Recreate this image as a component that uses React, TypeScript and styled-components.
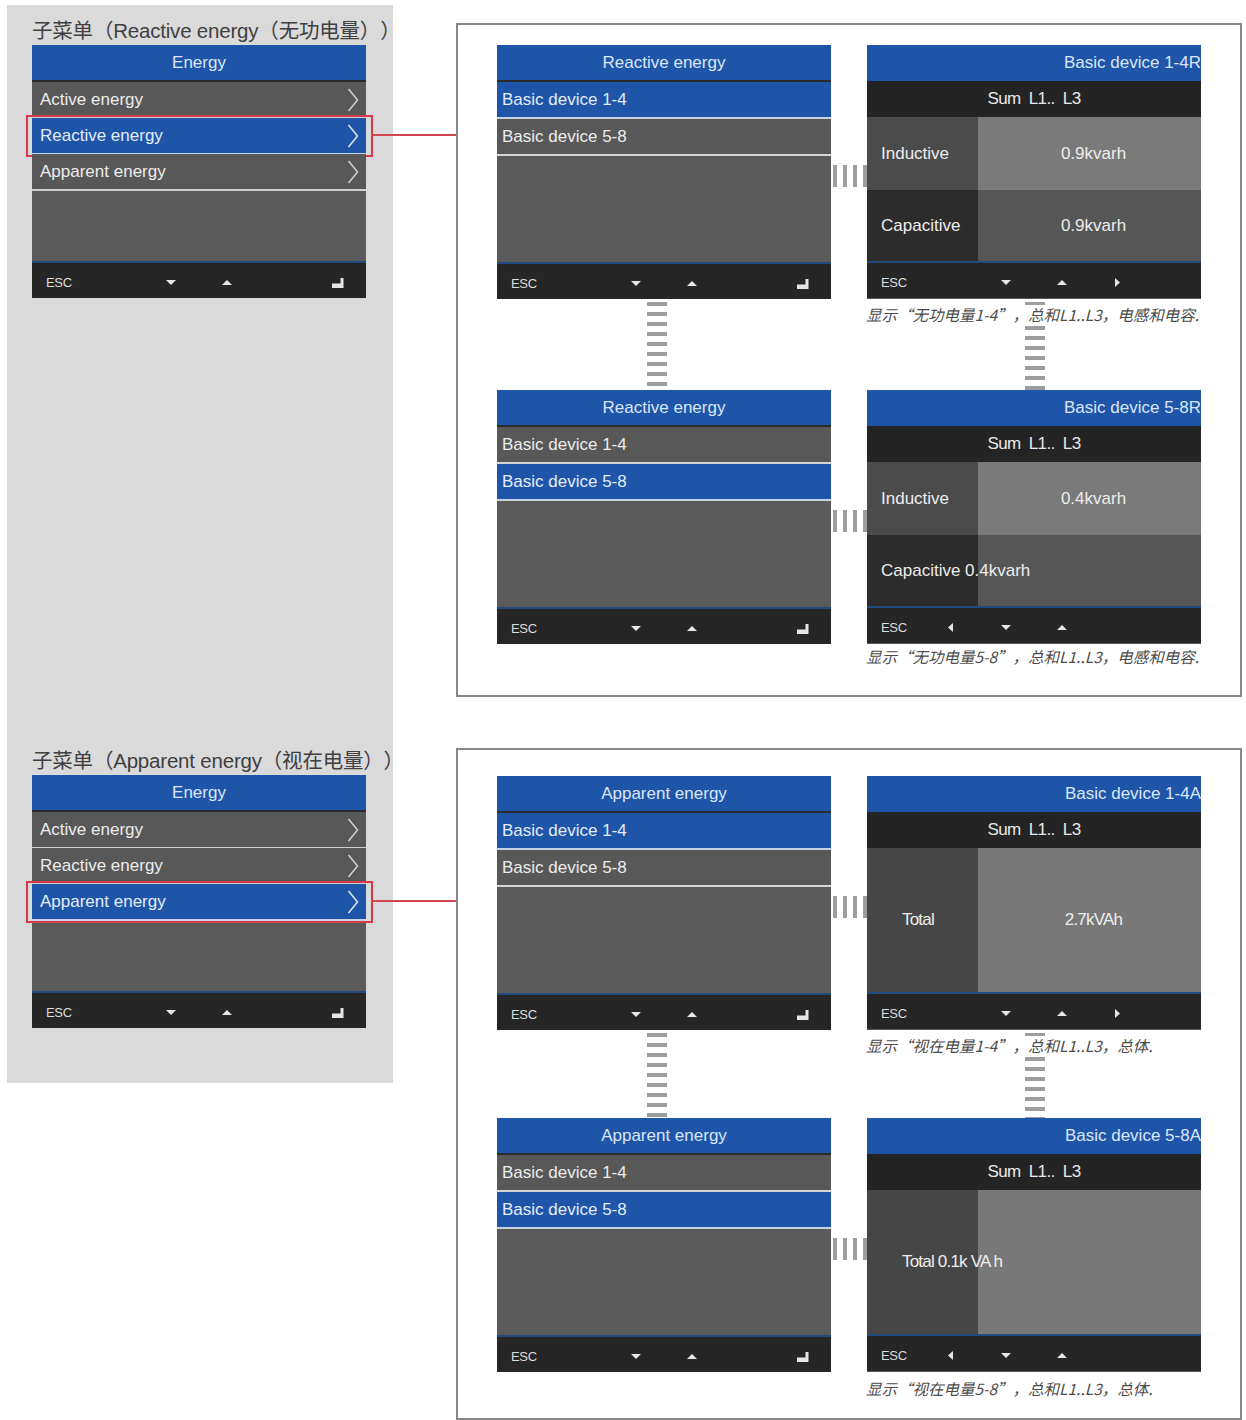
import React from "react";
import styled, { createGlobalStyle } from "styled-components";

const BLUE = "#1f55a8";
const ROW = "#585858";
const SANS = `"Liberation Sans", Arial, "Noto Sans CJK SC", sans-serif`;

const GlobalStyle = createGlobalStyle`
  *, *::before, *::after { box-sizing: border-box; }
  html, body { margin: 0; padding: 0; background: #ffffff; }
  body { font-family: ${SANS}; }
`;

const Page = styled.div`
  display: flex;
  align-items: flex-start;
  width: 1246px;
  height: 1420px;
  overflow: hidden;
  background: #ffffff;
`;

/* ---------- left column: the Energy sub-menus ---------- */

const SidePanel = styled.aside`
  width: 386px;
  height: 1078px;
  margin: 5px 0 0 7px;
  padding: 12px 0 0 25px;
  background: #dadada;
  display: flex;
  flex-direction: column;
`;

const MenuGroup = styled.section<{ $gap: number }>`
  display: flex;
  flex-direction: column;
  margin-top: ${(p) => p.$gap}px;
`;

const GroupTitle = styled.h2`
  margin: 0;
  height: 28px;
  line-height: 28px;
  font-size: 20.5px;
  font-weight: 400;
  color: #404040;
  white-space: nowrap;
  letter-spacing: -0.2px;
  text-spacing-trim: space-all;
`;

/* ---------- device screen parts ---------- */

const Screen = styled.div<{ $h: number }>`
  width: 334px;
  height: ${(p) => p.$h}px;
  display: flex;
  flex-direction: column;
  background: ${ROW};
  font-family: ${SANS};
`;

const ScreenHeader = styled.div<{ $align: "center" | "flex-end"; $divider: boolean; $h: number }>`
  height: ${(p) => p.$h}px;
  flex: none;
  background: ${BLUE};
  color: #d9e6f8;
  font-size: 17px;
  display: flex;
  align-items: center;
  justify-content: ${(p) => p.$align};
  white-space: nowrap;
  overflow: hidden;
  border-bottom: ${(p) => (p.$divider ? "2px solid #2a2a2a" : "none")};
`;

const MenuRow = styled.div<{ $on: boolean; $last: boolean; $marked: boolean }>`
  position: relative;
  flex: none;
  height: ${(p) => (p.$last ? 37 : 36)}px;
  padding: 0 7px 0 8px;
  display: flex;
  align-items: center;
  justify-content: space-between;
  background: ${(p) => (p.$on ? BLUE : ROW)};
  color: ${(p) => (p.$on ? "#e3ecf9" : "#ececec")};
  font-size: 17px;
  border-bottom: ${(p) => (p.$last ? 2 : 1)}px solid ${(p) => (p.$on ? "#c6d2e4" : "#cfcfcf")};

  ${(p) =>
    p.$marked &&
    `
    &::before {
      content: "";
      position: absolute;
      left: -6px;
      right: -7px;
      top: -3px;
      bottom: -4px;
      border: 2px solid #d33b49;
      pointer-events: none;
    }
    &::after {
      content: "";
      position: absolute;
      left: calc(100% + 7px);
      top: calc(50% - 2px);
      width: 83px;
      height: 2px;
      background: #cf4650;
    }
  `}
`;

const ListRow = styled.div<{ $on: boolean }>`
  flex: none;
  height: 37px;
  padding-left: 5px;
  display: flex;
  align-items: center;
  background: ${(p) => (p.$on ? BLUE : ROW)};
  color: ${(p) => (p.$on ? "#e3ecf9" : "#ececec")};
  font-size: 17px;
  border-bottom: 2px solid ${(p) => (p.$on ? "#c6d2e4" : "#d6d6d6")};
`;

const Filler = styled.div`
  flex: 1;
  background: #5a5a5a;
`;

const Footer = styled.div`
  flex: none;
  height: 37px;
  background: #262626;
  border-top: 2px solid #24497e;
  display: grid;
  grid-template-columns: repeat(6, 1fr);
  align-items: center;
`;

const FooterSlot = styled.div<{ $start?: boolean }>`
  display: flex;
  align-items: center;
  justify-content: ${(p) => (p.$start ? "flex-start" : "center")};
  padding-left: ${(p) => (p.$start ? 14 : 0)}px;
  padding-top: 4px;
  color: #dcdcdc;
  font-size: 13px;
  letter-spacing: -0.3px;
`;

const SumRow = styled.div`
  flex: none;
  height: 36px;
  background: #242424;
  color: #e8e8e8;
  font-size: 17px;
  display: flex;
  align-items: center;
  justify-content: center;
  letter-spacing: -0.6px;
  word-spacing: 4px;
  white-space: pre;
`;

const DataRow = styled.div<{ $h: number }>`
  flex: none;
  height: ${(p) => p.$h}px;
  display: grid;
  grid-template-columns: 111px 1fr;
`;

const LabelCell = styled.div<{ $bg: string; $pad: number; $tight: boolean }>`
  position: relative;
  z-index: 1;
  background: ${(p) => p.$bg};
  padding-left: ${(p) => p.$pad}px;
  display: flex;
  align-items: center;
  white-space: nowrap;
  color: #ededed;
  font-size: 17px;
  letter-spacing: ${(p) => (p.$tight ? "-0.8px" : "0")};
`;

const ValueCell = styled.div<{ $bg: string; $tight: boolean }>`
  background: ${(p) => p.$bg};
  padding-left: 8px;
  display: flex;
  align-items: center;
  justify-content: center;
  color: #ededed;
  font-size: 17px;
  letter-spacing: ${(p) => (p.$tight ? "-0.8px" : "0")};
`;

/* ---------- right column: framed navigation boards ---------- */

const BoardColumn = styled.div`
  display: flex;
  flex-direction: column;
  gap: 51px;
  margin: 23px 0 0 63px;
`;

const Board = styled.section<{ $top: number; $h: number }>`
  width: 786px;
  height: ${(p) => p.$h}px;
  border: 2px solid #878787;
  padding: ${(p) => p.$top}px 39px 0;
  display: grid;
  grid-template-columns: 334px 36px 334px;
  align-content: start;
`;

const HLink = styled.div`
  align-self: start;
  margin-top: 120px;
  height: 22px;
  background: repeating-linear-gradient(
    to right,
    transparent 0 2px,
    #9d9d9d 2px 6px,
    transparent 6px 10px
  );
`;

const LinkCell = styled.div<{ $h: number }>`
  height: ${(p) => p.$h}px;
  display: flex;
  flex-direction: column;
`;

const VLink = styled.div<{ $x: number; $h?: number }>`
  width: 20px;
  margin-left: ${(p) => p.$x}px;
  ${(p) => (p.$h ? `height: ${p.$h}px; flex: none;` : "flex: 1;")}
  background: repeating-linear-gradient(
    to bottom,
    transparent 0 3px,
    #9d9d9d 3px 7px,
    transparent 7px 10px
  );
`;

const Caption = styled.p<{ $mt?: number }>`
  margin: ${(p) => p.$mt ?? 0}px 0 0 -1px;
  height: 18px;
  line-height: 18px;
  background: #ffffff;
  color: #4c4c4c;
  font-family: "Noto Sans CJK SC", "Liberation Sans", sans-serif;
  font-size: 15.5px;
  font-style: italic;
  white-space: nowrap;
`;

/* ---------- icons ---------- */

type Dir = "up" | "down" | "left" | "right";

const Tri = ({ dir }: { dir: Dir }) => {
  const flat = dir === "up" || dir === "down";
  const w = flat ? 10 : 5;
  const h = flat ? 5 : 9;
  const pts = {
    down: "0,0 10,0 5,5",
    up: "5,0 10,5 0,5",
    left: "5,0 5,9 0,4.5",
    right: "0,0 5,4.5 0,9",
  }[dir];
  return (
    <svg width={w} height={h} viewBox={`0 0 ${w} ${h}`}>
      <polygon points={pts} fill="#e6e6e6" />
    </svg>
  );
};

const EnterKey = () => (
  <svg width="12" height="10" viewBox="0 0 12 10">
    <path d="M8.5 0 H11.5 V10 H0 V5.5 H8.5 Z" fill="#e6e6e6" />
  </svg>
);

const Chevron = ({ on }: { on: boolean }) => (
  <svg width="12" height="24" viewBox="0 0 12 24">
    <polyline
      points="1.5,1 10.5,12 1.5,23"
      fill="none"
      stroke={on ? "#d6e2f4" : "#cfcfcf"}
      strokeWidth="1.6"
    />
  </svg>
);

type Key = "esc" | Dir | "enter" | null;

const KeyBar = ({ keys }: { keys: Key[] }) => (
  <Footer>
    {keys.map((k, i) => (
      <FooterSlot key={i} $start={k === "esc"}>
        {k === "esc" && "ESC"}
        {k === "enter" && <EnterKey />}
        {(k === "up" || k === "down" || k === "left" || k === "right") && <Tri dir={k} />}
      </FooterSlot>
    ))}
  </Footer>
);

const LIST_KEYS: Key[] = ["esc", null, "down", "up", null, "enter"];

/* ---------- screens ---------- */

const MENU_ITEMS = ["Active energy", "Reactive energy", "Apparent energy"];

const EnergyMenu = ({ selected }: { selected: number }) => (
  <Screen $h={253}>
    <ScreenHeader $align="center" $divider $h={37}>
      Energy
    </ScreenHeader>
    {MENU_ITEMS.map((item, i) => (
      <MenuRow
        key={item}
        $on={i === selected}
        $marked={i === selected}
        $last={i === MENU_ITEMS.length - 1}
      >
        <span>{item}</span>
        <Chevron on={i === selected} />
      </MenuRow>
    ))}
    <Filler />
    <KeyBar keys={LIST_KEYS} />
  </Screen>
);

const DeviceList = ({ title, selected }: { title: string; selected: number }) => (
  <Screen $h={254}>
    <ScreenHeader $align="center" $divider $h={37}>
      {title}
    </ScreenHeader>
    {["Basic device 1-4", "Basic device 5-8"].map((d, i) => (
      <ListRow key={d} $on={i === selected}>
        {d}
      </ListRow>
    ))}
    <Filler />
    <KeyBar keys={LIST_KEYS} />
  </Screen>
);

type Reading = {
  label: string;
  value: string;
  h: number;
  labelBg: string;
  valueBg: string;
  pad: number;
  tight?: boolean;
};

type Detail = {
  title: string;
  readings: Reading[];
  keys: Key[];
};

const DeviceDetail = ({ d }: { d: Detail }) => (
  <Screen $h={254}>
    <ScreenHeader $align="flex-end" $divider={false} $h={36}>
      {d.title}
    </ScreenHeader>
    <SumRow>{"Sum L1.. L3"}</SumRow>
    {d.readings.map((r) => (
      <DataRow key={r.label} $h={r.h}>
        <LabelCell $bg={r.labelBg} $pad={r.pad} $tight={!!r.tight}>
          {r.label}
        </LabelCell>
        <ValueCell $bg={r.valueBg} $tight={!!r.tight}>
          {r.value}
        </ValueCell>
      </DataRow>
    ))}
    <KeyBar keys={d.keys} />
  </Screen>
);

/* ---------- data ---------- */

type Step = { selected: number; detail: Detail; caption: string };
type BoardData = { list: string; top: number; h: number; link: number; tailGap: number; steps: [Step, Step] };

const inductive = (value: string): Reading => ({
  label: "Inductive",
  value,
  h: 73,
  labelBg: "#4b4b4b",
  valueBg: "#7a7a7a",
  pad: 14,
});

const capacitive = (label: string, value: string): Reading => ({
  label,
  value,
  h: 71,
  labelBg: "#2c2c2c",
  valueBg: "#565656",
  pad: 14,
});

const total = (label: string, value: string): Reading => ({
  label,
  value,
  h: 144,
  labelBg: "#464646",
  valueBg: "#787878",
  pad: 35,
  tight: true,
});

const BOARDS: BoardData[] = [
  {
    list: "Reactive energy",
    top: 20,
    h: 674,
    link: 91,
    tailGap: 3,
    steps: [
      {
        selected: 0,
        detail: {
          title: "Basic device 1-4R",
          readings: [inductive("0.9kvarh"), capacitive("Capacitive", "0.9kvarh")],
          keys: ["esc", null, "down", "up", "right", null],
        },
        caption: "显示“无功电量1-4”，总和L1..L3，电感和电容.",
      },
      {
        selected: 1,
        detail: {
          title: "Basic device 5-8R",
          readings: [inductive("0.4kvarh"), capacitive("Capacitive 0.4kvarh", "")],
          keys: ["esc", "left", "down", "up", null, null],
        },
        caption: "显示“无功电量5-8”，总和L1..L3，电感和电容.",
      },
    ],
  },
  {
    list: "Apparent energy",
    top: 26,
    h: 672,
    link: 88,
    tailGap: 7,
    steps: [
      {
        selected: 0,
        detail: {
          title: "Basic device 1-4A",
          readings: [total("Total", "2.7kVAh")],
          keys: ["esc", null, "down", "up", "right", null],
        },
        caption: "显示“视在电量1-4”，总和L1..L3，总体.",
      },
      {
        selected: 1,
        detail: {
          title: "Basic device 5-8A",
          readings: [total("Total 0.1k VA h", "")],
          keys: ["esc", "left", "down", "up", null, null],
        },
        caption: "显示“视在电量5-8”，总和L1..L3，总体.",
      },
    ],
  },
];

const NavBoard = ({ b }: { b: BoardData }) => {
  const [first, second] = b.steps;
  return (
    <Board $top={b.top} $h={b.h}>
      <DeviceList title={b.list} selected={first.selected} />
      <HLink />
      <DeviceDetail d={first.detail} />

      <LinkCell $h={b.link}>
        <VLink $x={150} />
      </LinkCell>
      <span />
      <LinkCell $h={b.link}>
        <VLink $x={158} $h={6} />
        <Caption>{first.caption}</Caption>
        <VLink $x={158} />
      </LinkCell>

      <DeviceList title={b.list} selected={second.selected} />
      <HLink />
      <DeviceDetail d={second.detail} />

      <span />
      <span />
      <Caption $mt={b.tailGap}>{second.caption}</Caption>
    </Board>
  );
};

export default function App() {
  return (
    <>
      <GlobalStyle />
      <Page>
        <SidePanel>
          <MenuGroup $gap={0}>
            <GroupTitle>子菜单（Reactive energy（无功电量））</GroupTitle>
            <EnergyMenu selected={1} />
          </MenuGroup>
          <MenuGroup $gap={449}>
            <GroupTitle>子菜单（Apparent energy（视在电量））</GroupTitle>
            <EnergyMenu selected={2} />
          </MenuGroup>
        </SidePanel>
        <BoardColumn>
          {BOARDS.map((b) => (
            <NavBoard key={b.list} b={b} />
          ))}
        </BoardColumn>
      </Page>
    </>
  );
}
